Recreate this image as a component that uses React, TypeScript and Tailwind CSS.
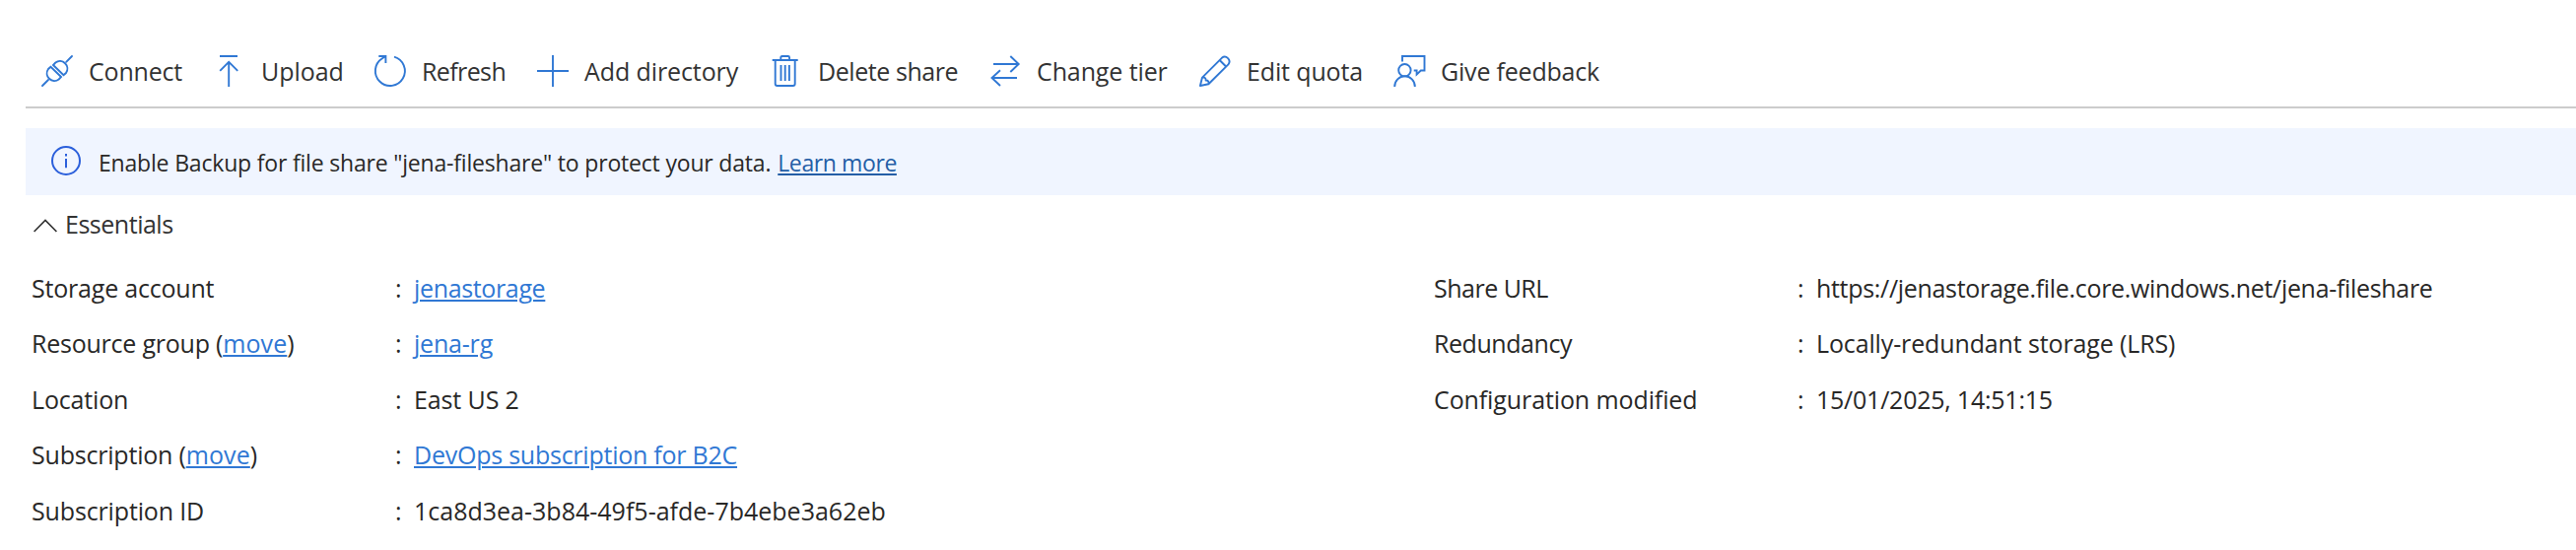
import type { ReactNode } from "react";

function Icon({ children }: { children: ReactNode }) {
  return (
    <svg viewBox="0 0 32 32" className="size-8 shrink-0 overflow-visible" fill="none" stroke="#3078d4" strokeWidth="1.9">
      {children}
    </svg>
  );
}

const commands: { label: string; width: string; tracking: string; icon: ReactNode }[] = [
  {
    label: "Connect",
    width: "w-[174px]",
    tracking: "tracking-[-0.194px]",
    icon: (
      <>
        <path d="M12 10 22.5 20.3 25 18A7.6 7.6 0 0 0 14.3 7.5Z" />
        <path d="M20 22 9.5 11.7 7 14A7.6 7.6 0 0 0 17.7 24.5Z" />
        <path d="M25.2 6.8 31 1M7 25 1 31" strokeLinecap="round" />
      </>
    ),
  },
  {
    label: "Upload",
    width: "w-[164px]",
    tracking: "ml-px tracking-[-0.032px]",
    icon: <path d="M7 1H25M16.2 32V6.6M7.2 15.8 16.2 6.8 25.2 15.8" />,
  },
  {
    label: "Refresh",
    width: "w-[165px]",
    tracking: "tracking-[-0.608px]",
    icon: <path d="M20 1.6A15 15 0 1 1 7.9 3.3L11 1.2M4.3 1H11.4V8" />,
  },
  {
    label: "Add directory",
    width: "w-[236px]",
    tracking: "tracking-[-0.1px]",
    icon: <path d="M16 0V32M0 16H32" />,
  },
  {
    label: "Delete share",
    width: "w-[223px]",
    tracking: "ml-px tracking-[-0.43px]",
    icon: (
      <>
        <path d="M2.7 5H28.7M11.3 5V2.4Q11.3 1 12.7 1H18.7Q20.1 1 20.1 2.4V5" />
        <path d="M5.7 5V29Q5.7 31 7.7 31H23.7Q25.7 31 25.7 29V5M11.5 10V26M15.7 10V26M19.9 10V26" />
      </>
    ),
  },
  {
    label: "Change tier",
    width: "w-[213px]",
    tracking: "tracking-[-0.107px]",
    icon: <path d="M4 9H29.5M21.3 1 29.7 9 21.3 17M28 23H2.5M11 15.3 2.5 23 11 31" />,
  },
  {
    label: "Edit quota",
    width: "w-[197px]",
    tracking: "tracking-[-0.13px]",
    icon: (
      <path
        d="M.9 31 3 22.6 22.8 2.8A4.7 4.7 0 0 1 29.4 9.4L9.4 29.2ZM20.6 5 27.1 11.5M3 22.7C5.2 22.2 6.9 23.1 6.6 25.5 9 25.2 9.9 27 9.4 29.2"
        strokeLinejoin="round"
      />
    ),
  },
  {
    label: "Give feedback",
    width: "w-[220px]",
    tracking: "tracking-[-0.2px]",
    icon: (
      <>
        <path d="M9 6.4V1H31.5V15.5H27.8L23.6 19.6V15.5H20.7" />
        <circle cx="11.4" cy="15.2" r="6.2" />
        <path d="M1.2 32A10.3 10.7 0 0 1 21.8 32" />
      </>
    ),
  },
];

const link = "text-[#3078d4] underline decoration-2 underline-offset-2";

function Move() {
  return <a className={`${link} tracking-[0.11px]`}>move</a>;
}

const left: [ReactNode, ReactNode][] = [
  [
    <span className="tracking-[-0.201px]">Storage account</span>,
    <a className={`${link} tracking-[-0.35px]`}>jenastorage</a>,
  ],
  [
    <span className="tracking-[-0.229px]">Resource group (<Move />)</span>,
    <a className={`${link} tracking-[-0.2px]`}>jena-rg</a>,
  ],
  [
    <span className="tracking-[-0.174px]">Location</span>,
    <span className="tracking-[-0.116px]">East US 2</span>,
  ],
  [
    <span className="tracking-[-0.203px]">Subscription (<Move />)</span>,
    <a className={`${link} tracking-[-0.24px]`}>DevOps subscription for B2C</a>,
  ],
  [
    <span className="tracking-[-0.144px]">Subscription ID</span>,
    <span className="tracking-[0.005px]">1ca8d3ea-3b84-49f5-afde-7b4ebe3a62eb</span>,
  ],
];

const right: [ReactNode, ReactNode][] = [
  [
    <span className="tracking-[-0.505px]">Share URL</span>,
    <span className="tracking-[-0.315px]">https://jenastorage.file.core.windows.net/jena-fileshare</span>,
  ],
  [
    <span className="tracking-[-0.436px]">Redundancy</span>,
    <span className="tracking-[-0.13px]">Locally-redundant storage (LRS)</span>,
  ],
  [
    <span className="tracking-[-0.104px]">Configuration modified</span>,
    <span className="tracking-[-0.235px]">15/01/2025, 14:51:15</span>,
  ],
];

function Properties({ rows }: { rows: [ReactNode, ReactNode][] }) {
  return (
    <dl className="w-[1423px] shrink-0 text-[#292827]">
      {rows.map(([label, value], i) => (
        <div key={i} className="flex h-[56.5px] items-center">
          <dt className="w-[369px]">{label}</dt>
          <span className="w-[19px]">:</span>
          <dd>{value}</dd>
        </div>
      ))}
    </dl>
  );
}

export default function App() {
  return (
    <div className="h-[558px] w-[2614px] overflow-hidden bg-white pl-[26px] font-['Open_Sans','Noto_Sans',sans-serif] text-[25px] leading-[34px] whitespace-nowrap text-[#333333]">
      <nav className="flex h-[110px] border-b-2 border-[#cccccc] pt-10 pl-4">
        {commands.map((c) => (
          <button key={c.label} className={`flex h-16 shrink-0 items-center gap-4 ${c.width}`}>
            <Icon>{c.icon}</Icon>
            <span className={c.tracking}>{c.label}</span>
          </button>
        ))}
      </nav>

      <div className="mt-5 flex h-[68px] items-center bg-[#f0f5ff] pl-[26px] text-[23px] text-[#292827]">
        <svg viewBox="0 0 30 30" className="mb-0.5 size-[30px] shrink-0" fill="none" stroke="#2b5fdb" strokeWidth="2">
          <circle cx="15" cy="15" r="14" />
          <path d="M15 13V22.3M15 8V10.4" />
        </svg>
        <p className="mt-0.5 ml-[18px] tracking-[-0.186px]">
          Enable Backup for file share "jena-fileshare" to protect your data.
        </p>
        <a className="mt-0.5 ml-[7px] tracking-[-0.4px] text-[#245ea6] underline decoration-2 underline-offset-2">
          Learn more
        </a>
      </div>

      <div className="flex h-[58px] items-center gap-2 pl-2">
        <svg viewBox="0 0 24 14" className="mt-1 h-3.5 w-6 shrink-0" fill="none" stroke="#333333" strokeWidth="1.7">
          <path d="M.6 13 12 1.4 23.4 13" />
        </svg>
        <span className="tracking-[-0.479px]">Essentials</span>
      </div>

      <div className="flex pt-[7.7px] pl-1.5">
        <Properties rows={left} />
        <Properties rows={right} />
      </div>
    </div>
  );
}
